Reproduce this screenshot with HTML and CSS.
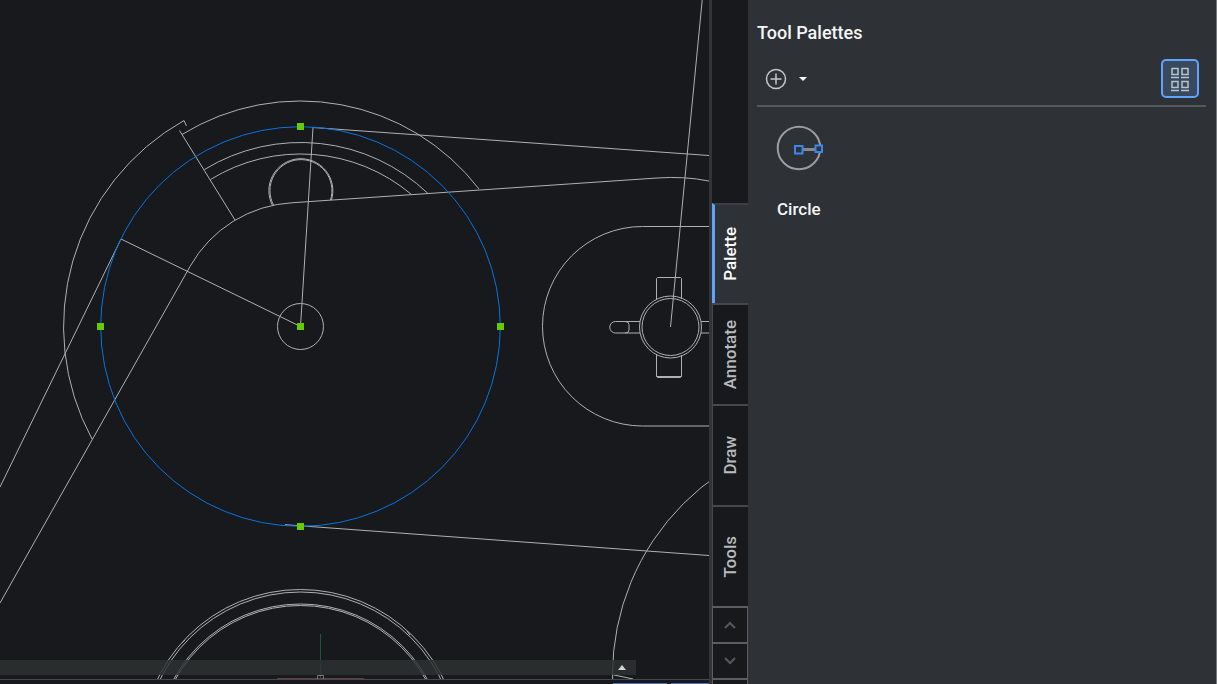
FILE: index.html
```html
<!DOCTYPE html>
<html lang="en">
<head>
<meta charset="utf-8">
<meta name="viewport" content="width=device-width, initial-scale=1">
<title>Tool Palettes</title>
<link rel="stylesheet" href="styles.css">
</head>
<body>
<div class="workspace">
  <main class="viewport">
    <div class="canvas">
      <svg class="drawing" role="img" aria-label="Part drawing">
        <g class="lines">
          <path d="M182 134.500A225.500 225.500 0 0 1 479 189"/>
          <path d="M92 439A236.500 236.500 0 0 1 184 120.500L186.500 126"/>
          <path d="M204.500 169.500A184.500 184.500 0 0 1 428 193.500"/>
          <path d="M210.500 179.500A172 172 0 0 1 411.500 194.500"/>
          <path d="M179.500 130.500L235 220"/>
          <path d="M0 603L190 266.500A125 125 0 0 1 293 202.700L657 178Q684 176 709 181"/>
          <circle cx="300.500" cy="326.500" r="23"/>
          <path d="M0 487L121 239L300.500 326.500L313 127.500L709 155.500"/>
          <path d="M285 524.700L709 555.500"/>
          <path d="M272.500 205.500A32 32 0 1 1 331.500 200"/>
          <path d="M273.500 205A31 31 0 1 1 330.500 200"/>
          <path d="M710 226.500H642.500A100 99.750 0 0 0 642.500 426H710"/>
          <circle cx="670.500" cy="327" r="31"/>
          <circle cx="670.500" cy="327" r="28.500"/>
          <path d="M656.500 299V278.500L657.500 277.500H680.500L681.500 278.500V299M656.500 355V376.500L657.500 377.500H680.500L681.500 376.500V355M656.500 376.500H681.500"/>
          <path d="M640 321.500H615.500A5.750 5.750 0 0 0 615.500 333H640M625 321.500Q629 321.500 629 324.500V330Q629 333 625 333M701 321.500H710M701 333H710"/>
          <path d="M670.500 327L702.200 0"/>
          <circle cx="855" cy="675" r="242.500"/>
          <path d="M612 674.500L633 679"/>
          <circle cx="300.500" cy="748.500" r="159"/>
          <circle cx="300.500" cy="748.500" r="156.500"/>
          <circle cx="300.500" cy="748.500" r="144.500"/>
          <circle cx="300.500" cy="748.500" r="143"/>
          <path d="M182 643L185 640M407 631L410 635"/>
        </g>
        <circle class="selected" cx="300.500" cy="326.500" r="199.800"/>
        <path class="axis-y" d="M320.500 634V679"/>
        <path class="axis-x" d="M277 678.500H364"/>
        <path class="origin" d="M317.500 680V675.500H323.500V680"/>
        <path class="grips" d="M297 123h7v7h-7zM297 323h7v7h-7zM97 323h7v7h-7zM497 323h7v7h-7zM297 523h7v7h-7z"/>
      </svg>
      <button class="command-bar" type="button" aria-label="Expand command line">
        <svg width="8" height="5" viewBox="0 0 8 5"><path d="M4 0L8 5H0z"/></svg>
      </button>
    </div>
    <div class="status"><span class="status-wide"></span><span class="status-narrow"></span></div>
  </main>

  <nav class="tabs" aria-label="Palette tabs">
    <button class="tab tab-active" type="button"><span>Palette</span></button>
    <button class="tab" type="button"><span>Annotate</span></button>
    <button class="tab" type="button"><span>Draw</span></button>
    <button class="tab" type="button"><span>Tools</span></button>
    <button class="scroll" type="button" aria-label="Previous tabs"><svg width="12" height="8" viewBox="0 0 12 8"><path d="M1 7L6 2L11 7"/></svg></button>
    <button class="scroll" type="button" aria-label="Next tabs"><svg width="12" height="8" viewBox="0 0 12 8"><path d="M1 1L6 6L11 1"/></svg></button>
    <div class="tabs-end"></div>
  </nav>

  <aside class="panel">
    <h1 class="title">Tool Palettes</h1>
    <div class="toolbar">
      <button class="add" type="button" aria-label="Add tool">
        <svg width="22" height="22" viewBox="0 0 22 22"><circle cx="11" cy="11" r="9.500"/><path d="M11 5.500V16.500M5.500 11H16.500"/></svg>
        <svg class="caret" width="8" height="4" viewBox="0 0 8 4"><path d="M0 0H8L4 4z"/></svg>
      </button>
      <button class="view" type="button" aria-label="Grid view" aria-pressed="true">
        <svg width="20" height="26" viewBox="0 0 20 26"><path d="M2 2.500h6v6h-6zM12 2.500h6v6h-6zM2 15.500h6v6h-6zM12 15.500h6v6h-6zM1 11.500h8M11 11.500h8M1 24.500h8M11 24.500h8"/></svg>
      </button>
    </div>
    <button class="tool" type="button">
      <svg width="48" height="46" viewBox="0 0 48 46">
        <circle class="tool-ring" cx="23" cy="23" r="21.300"/>
        <path class="tool-radius" d="M27 24.500H39"/>
        <path class="tool-grip" d="M19 21h7.500v7.500h-7.500zM39.500 20.500h6.500v6.500h-6.500z"/>
      </svg>
      <span>Circle</span>
    </button>
  </aside>
</div>
</body>
</html>
```
FILE: styles.css
```css
* {
  box-sizing: border-box;
}

body {
  margin: 0;
  background: #18191c;
  color: #f5f6f7;
  font-family: Roboto, "Liberation Sans", sans-serif;
  font-size: 17px;
  font-weight: 500;
}

button {
  margin: 0;
  padding: 0;
  border: 0;
  background: none;
  color: inherit;
  font: inherit;
}

svg {
  display: block;
}

.workspace {
  display: flex;
  height: 100vh;
  overflow: hidden;
}

.viewport {
  display: flex;
  flex: 1;
  flex-direction: column;
  min-width: 0;
}

.canvas {
  position: relative;
  flex: 1;
  min-height: 0;
  border-bottom: 1px solid #46484b;
}

.drawing {
  width: 100%;
  height: 100%;
  overflow: hidden;
  fill: none;
  stroke-width: 1;
}

.lines {
  stroke: #b0b0b1;
}

.selected {
  stroke: #0674e2;
}

.axis-y {
  stroke: #1c573c;
}

.axis-x {
  stroke: #6b3a3d;
}

.origin {
  stroke: #77797b;
}

.grips {
  fill: #66cc00;
}

.command-bar {
  position: absolute;
  bottom: 4px;
  left: 0;
  display: flex;
  align-items: center;
  justify-content: flex-end;
  width: 636px;
  height: 15px;
  padding-right: 10px;
  background: rgba(46, 50, 50, 0.82);
  fill: #d2d4d4;
}

.status {
  display: flex;
  align-items: flex-end;
  justify-content: flex-end;
  gap: 4px;
  height: 4px;
  background: #18181f;
}

.status-wide,
.status-narrow {
  width: 54px;
  height: 1px;
  background: #4572b4;
}

.status-narrow {
  width: 38px;
}

.tabs {
  display: flex;
  flex: 0 0 39px;
  flex-direction: column;
  justify-content: flex-end;
  border-left: 3px solid #303337;
}

.tab {
  display: flex;
  flex: 0 0 101px;
  align-items: center;
  justify-content: center;
  padding-right: 1px;
  border-top: 2px solid #44474c;
  border-left: 1px solid #44474c;
  color: #b9babd;
}

.tab span {
  writing-mode: vertical-rl;
  transform: rotate(180deg);
}

.tab-active {
  flex-basis: 100px;
  padding-right: 3px;
  border-top-color: #3b3e42;
  border-left: 3px solid #60a3ff;
  background: #2e3135;
  color: #ffffff;
}

.scroll {
  display: flex;
  flex: 0 0 36px;
  align-items: center;
  justify-content: center;
  border: 1px solid #5a5d62;
  border-top-width: 2px;
  border-bottom: 0;
  fill: none;
  stroke: #56585c;
  stroke-width: 2;
}

.tabs-end {
  flex: 0 0 6px;
  border: 1px solid #5a5d62;
  border-top-width: 2px;
  border-bottom: 0;
}

.panel {
  flex: 0 0 469px;
  padding: 22px 10px 0 9px;
  border-right: 1px solid #777a7e;
  background: #2e3135;
}

.title {
  margin: 0;
  font-size: 18px;
  font-weight: 500;
  line-height: 22px;
}

.toolbar {
  display: flex;
  align-items: center;
  justify-content: space-between;
  padding: 15px 7px 7px 8px;
  border-bottom: 2px solid #55585c;
}

.add {
  display: flex;
  align-items: center;
  gap: 12px;
  fill: none;
  stroke: #c3c7ce;
  stroke-width: 1.5;
}

.caret {
  fill: #ffffff;
  stroke: none;
}

.view {
  display: flex;
  align-items: center;
  justify-content: center;
  width: 38px;
  height: 39px;
  border: 2px solid #60a3ff;
  border-radius: 5px;
  background: #38495e;
  fill: none;
  stroke: #b7c5cf;
  stroke-width: 1.5;
}

.tool {
  display: flex;
  flex-direction: column;
  align-items: flex-start;
  gap: 28px;
  padding: 18px 0 0 19px;
}

.tool span {
  padding-left: 1px;
  line-height: 20px;
}

.tool-ring {
  fill: none;
  stroke: #9b9da0;
  stroke-width: 2;
}

.tool-radius {
  fill: none;
  stroke: #85888c;
  stroke-width: 3;
}

.tool-grip {
  fill: #2e3135;
  stroke: #3987ee;
  stroke-width: 2;
}
```
